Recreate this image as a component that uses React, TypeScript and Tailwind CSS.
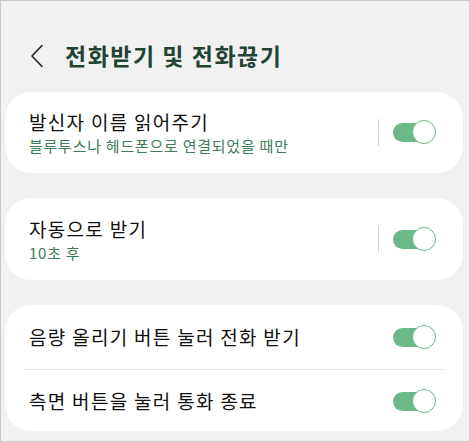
import React from "react";

const font = { fontFamily: '"Noto Sans CJK KR", "Noto Sans", sans-serif' };

function Toggle() {
  return (
    <div className="relative h-[24px] w-[43px] shrink-0">
      <div className="absolute left-0 top-[3px] h-[19px] w-[41px] rounded-full bg-[#6cb88b]" />
      <div className="absolute right-0 top-0 h-[24px] w-[24px] rounded-full border-[1.5px] border-[#6cb88b] bg-white" />
    </div>
  );
}

function Row({ title, sub, divider }: { title: string; sub?: string; divider?: boolean }) {
  return (
    <div className="flex items-center pl-[24px] pr-[27px]">
      <div className="flex flex-1 flex-col">
        <span className="text-[19px] leading-[26px] tracking-[1.3px] text-[#111]">{title}</span>
        {sub && <span className="mt-[1px] text-[15px] leading-[20px] tracking-[0.75px] text-[#3e7b5a]">{sub}</span>}
      </div>
      {divider && <div className="mr-[14px] h-[27px] w-px bg-[#d6d6d6]" />}
      <Toggle />
    </div>
  );
}

export default function App() {
  return (
    <div className="h-[442px] w-[470px] border border-[#c9c9c9] bg-[#f1f1f1]" style={font}>
      <div className="flex h-[91px] items-center pl-[29px] pt-[18px]">
        <svg width="14" height="24" viewBox="0 0 14 24" fill="none">
          <path d="M12 1.5 L2 12 L12 22.5" stroke="#222" strokeWidth="1.6" strokeLinecap="round" strokeLinejoin="round" />
        </svg>
        <h1 className="ml-[21px] text-[23px] font-bold tracking-[1.5px] text-[#234433]">전화받기 및 전화끊기</h1>
      </div>

      <div className="ml-[4px] mr-[6px] flex flex-col gap-[25px]">
        <div className="flex h-[81px] flex-col justify-center rounded-[26px] bg-white pb-[1px]">
          <Row title="발신자 이름 읽어주기" sub="블루투스나 헤드폰으로 연결되었을 때만" divider />
        </div>
        <div className="flex h-[82px] flex-col justify-center rounded-[26px] bg-white">
          <Row title="자동으로 받기" sub="10초 후" divider />
        </div>
        <div className="flex h-[126px] flex-col rounded-[26px] bg-white">
          <div className="flex h-[64px] flex-col justify-center">
            <Row title="음량 올리기 버튼 눌러 전화 받기" />
          </div>
          <div className="mx-[19px] h-px bg-[#e6e6e6]" />
          <div className="flex h-[61px] flex-col justify-center">
            <Row title="측면 버튼을 눌러 통화 종료" />
          </div>
        </div>
      </div>
    </div>
  );
}
